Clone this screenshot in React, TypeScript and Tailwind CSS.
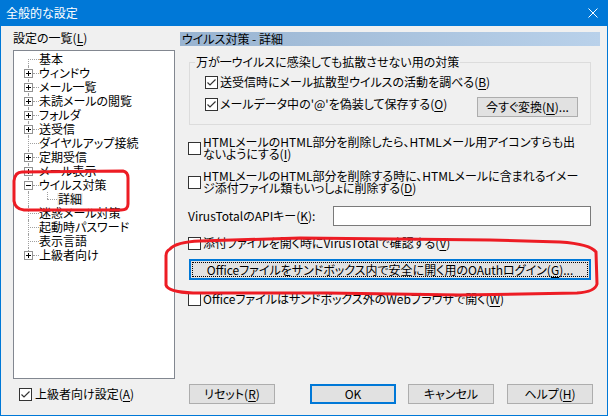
import React from 'react';

const U = ({ c }: { c: string }) => (
  <span className="underline underline-offset-[2px] decoration-1">{c}</span>
);

function Check({ checked }: { checked?: boolean }) {
  return (
    <span className="w-[13px] h-[13px] shrink-0 border border-[#333333] bg-white flex items-center justify-center">
      {checked && (
        <svg width="11" height="11" viewBox="0 0 11 11">
          <path d="M1.5 5.5 L4 8 L9.5 2.5" fill="none" stroke="#333333" strokeWidth="1.2" />
        </svg>
      )}
    </span>
  );
}

function Expander({ open }: { open?: boolean }) {
  return (
    <svg width="9" height="9" viewBox="0 0 9 9" className="absolute left-[10px] top-[3px]">
      <rect x="0.5" y="0.5" width="8" height="8" fill="#ffffff" stroke="#919191" />
      <path d="M2 4.5h5" stroke="#000000" />
      {!open && <path d="M4.5 2v5" stroke="#000000" />}
    </svg>
  );
}

type TreeItem = {
  label: string;
  expander?: 'plus' | 'minus';
  child?: boolean;
  selected?: boolean;
};

const tree: TreeItem[] = [
  { label: '基本' },
  { label: 'ウィンドウ', expander: 'plus' },
  { label: 'メール一覧', expander: 'plus' },
  { label: '未読メールの閲覧', expander: 'plus' },
  { label: 'フォルダ', expander: 'plus' },
  { label: '送受信', expander: 'plus' },
  { label: 'ダイヤルアップ接続' },
  { label: '定期受信', expander: 'plus' },
  { label: 'メール表示', expander: 'plus' },
  { label: 'ウイルス対策', expander: 'minus' },
  { label: '詳細', child: true, selected: true },
  { label: '迷惑メール対策' },
  { label: '起動時パスワード' },
  { label: '表示言語' },
  { label: '上級者向け', expander: 'plus' },
];

function TreeRow({ item, first, last }: { item: TreeItem; first: boolean; last: boolean }) {
  return (
    <div className="flex h-[14px] items-center">
      <div className={`relative h-[14px] shrink-0 ${item.child ? 'w-[43px]' : 'w-[25px]'}`}>
        {/* trunk */}
        <span
          className={`absolute left-[14px] border-l border-dotted border-[#a0a0a0] ${first ? 'top-[7px]' : 'top-0'} ${last ? 'h-[7px]' : 'bottom-0'}`}
        />
        {item.child ? (
          <>
            <span className="absolute left-[33px] top-0 h-[7px] border-l border-dotted border-[#a0a0a0]" />
            <span className="absolute left-[33px] top-[7px] w-[10px] border-t border-dotted border-[#a0a0a0]" />
          </>
        ) : (
          <span
            className={`absolute top-[7px] border-t border-dotted border-[#a0a0a0] ${item.expander ? 'left-[19px] w-[6px]' : 'left-[14px] w-[11px]'}`}
          />
        )}
        {item.expander && <Expander open={item.expander === 'minus'} />}
      </div>
      <span className={`leading-[12px] whitespace-nowrap ${item.selected ? 'bg-[#f0f0f0] px-[1px]' : ''}`}>
        {item.label}
      </span>
    </div>
  );
}

function Button({ children, focused, className = '' }: { children: React.ReactNode; focused?: boolean; className?: string }) {
  return (
    <div
      className={`h-[20px] flex items-center justify-center bg-[#e1e1e1] ${focused ? 'border-2 border-[#0078d7]' : 'border border-[#adadad]'} ${className}`}
    >
      {children}
    </div>
  );
}

export default function App() {
  return (
    <div className="relative w-[608px] h-[416px] bg-[#f0f0f0] text-[12px] leading-[12px] text-black font-['Noto_Sans_CJK_JP',sans-serif] [font-feature-settings:'palt'] overflow-hidden">
      {/* title bar */}
      <div className="h-[26px] bg-[#0078d7] flex items-center pl-[6px] pr-[10px]">
        <span className="text-white text-[12px]">全般的な設定</span>
        <svg width="10" height="10" viewBox="0 0 10 10" className="ml-auto">
          <path d="M0.5 0.5 L9.5 9.5 M9.5 0.5 L0.5 9.5" stroke="#ffffff" strokeWidth="1" />
        </svg>
      </div>

      {/* body */}
      <div className="h-[390px] border-x border-b border-[#0078d7] pt-[6px] flex flex-col">
        <div className="h-[347px] flex">
          {/* left: tree */}
          <div className="pl-[12px] w-[174px] shrink-0 flex flex-col">
            <div className="h-[12px] whitespace-nowrap">
              設定の一覧(<U c="L" />)
            </div>
            <div className="mt-[6px] h-[329px] w-[162px] bg-white border border-[#828790] pt-[1px]">
              {tree.map((item, i) => (
                <TreeRow key={item.label} item={item} first={i === 0} last={i === tree.length - 1} />
              ))}
            </div>
          </div>

          {/* right: settings */}
          <div className="ml-[5px] w-[420px] flex flex-col">
            <div className="h-[14px] bg-gradient-to-r from-[#99b4d1] to-[#b9d1ea] pl-[2px] flex items-center">
              ウイルス対策 - 詳細
            </div>

            <fieldset className="mt-[10px] ml-[9px] w-[402px] border border-[#dcdcdc] pl-[5px] pb-[7px]">
              <legend className="px-[1px] leading-[12px]">万が一ウイルスに感染しても拡散させない用の対策</legend>
              <div className="ml-[10px] mt-[7px] h-[14px] flex items-center gap-[2px]">
                <Check checked />
                <span className="whitespace-nowrap">
                  送受信時にメール拡散型ウイルスの活動を調べる(<U c="B" />)
                </span>
              </div>
              <div className="ml-[10px] mt-[8px] flex items-start">
                <div className="h-[14px] flex items-center gap-[2px]">
                  <Check checked />
                  <span className="whitespace-nowrap">
                    メールデータ中の'@'を偽装して保存する(<U c="O" />)
                  </span>
                </div>
                <Button className="ml-auto mr-[12px] w-[101px] h-[19px]">
                  今すぐ変換(<U c="N" />)...
                </Button>
              </div>
            </fieldset>

            <div className="ml-[8px] mt-[11px] flex items-center gap-[2px]">
              <Check />
              <span className="leading-[12px] whitespace-nowrap">
                HTMLメールのHTML部分を削除したら、HTMLメール用アイコンすらも出
                <br />
                ないようにする(<U c="I" />)
              </span>
            </div>

            <div className="ml-[8px] mt-[10px] flex items-center gap-[2px]">
              <Check />
              <span className="leading-[12px] whitespace-nowrap">
                HTMLメールのHTML部分を削除する時に、HTMLメールに含まれるイメー
                <br />
                ジ添付ファイル類もいっしょに削除する(<U c="D" />)
              </span>
            </div>

            <div className="ml-[8px] mt-[12px] h-[20px] flex items-center">
              <span className="w-[145px] shrink-0 whitespace-nowrap">
                VirusTotalのAPIキー(<U c="K" />):
              </span>
              <div className="w-[258px] h-[20px] bg-white border border-[#7a7a7a]" />
            </div>

            <div className="ml-[8px] mt-[10px] h-[14px] flex items-center gap-[2px]">
              <Check />
              <span className="whitespace-nowrap">
                添付ファイルを開く時にVirusTotalで確認する(<U c="V" />)
              </span>
            </div>

            <div className="ml-[9px] mt-[9px] w-[402px] h-[21px] bg-[#e1e1e1] border-2 border-[#0078d7] p-[1px]">
              <div className="h-full border border-dotted border-black flex items-center justify-center whitespace-nowrap">
                Officeファイルをサンドボックス内で安全に開く用のOAuthログイン(<U c="G" />)...
              </div>
            </div>

            <div className="ml-[8px] mt-[12px] h-[14px] flex items-center gap-[2px]">
              <Check />
              <span className="whitespace-nowrap">
                Officeファイルはサンドボックス外のWebブラウザで開く(<U c="W" />)
              </span>
            </div>
          </div>
        </div>

        {/* bottom buttons */}
        <div className="mt-[5px] h-[20px] flex items-center pl-[18px]">
          <div className="w-[170px] shrink-0 flex items-center gap-[3px]">
            <Check checked />
            <span className="whitespace-nowrap">
              上級者向け設定(<U c="A" />)
            </span>
          </div>
          <Button className="w-[86px]">
            リセット(<U c="R" />)
          </Button>
          <Button focused className="w-[86px] ml-[35px]">
            OK
          </Button>
          <Button className="w-[86px] ml-[12px]">キャンセル</Button>
          <Button className="w-[86px] ml-[13px]">
            ヘルプ(<U c="H" />)
          </Button>
        </div>
      </div>

      {/* red hand-drawn annotations */}
      <svg width="608" height="416" viewBox="0 0 608 416" className="absolute inset-0 pointer-events-none">
        <path
          d="M22 172 L123 171 Q128 172 128 178 L128 204 Q128 210 121 210 L24 210 Q15 209 14 201 L14 181 Q15 172 22 172 Z"
          fill="none"
          stroke="#ed1c24"
          strokeWidth="3"
        />
        <path
          d="M170 249 Q176 242 200 241 L300 238 L490 240 L560 242 Q590 244 596 252 L597 284 Q595 292 577 293 L460 295 L327 293 L193 293 Q168 292 166 285 L166 256 Q166 251 170 249 Z"
          fill="none"
          stroke="#ed1c24"
          strokeWidth="3"
        />
      </svg>
    </div>
  );
}
